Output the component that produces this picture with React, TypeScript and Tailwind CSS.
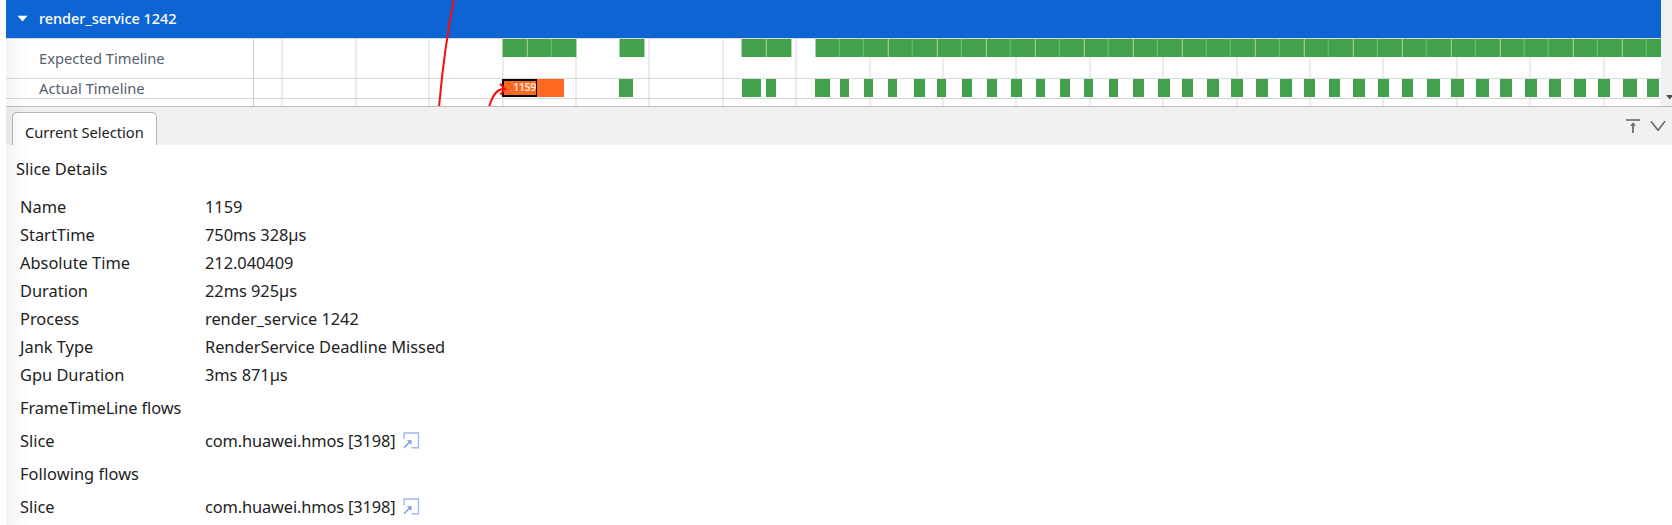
const GREEN = "#43a04c";

const gridLines = [
  281, 355, 428, 502, 575, 648, 722, 795, 869, 942, 1015, 1089, 1162, 1236, 1309, 1382, 1456, 1529, 1603,
];

const expectedRuns = [
  [502, 576],
  [619, 644],
  [741, 791],
  [815, 1661],
];

const strongGaps = [527, 766, 888, 937, 986, 1035, 1084, 1133, 1182, 1255, 1304, 1353, 1402, 1451, 1500, 1573, 1622];

const weakGaps = [
  551, 839, 863, 912, 961, 1010, 1059, 1108, 1157, 1206, 1230, 1279, 1328, 1377, 1426, 1475, 1524, 1548, 1597, 1646,
];

const actualFrames = [
  [619, 633], [742, 761], [766, 776], [815, 830], [840, 849], [864, 873], [888, 897], [914, 925], [937, 946],
  [962, 972], [987, 997], [1011, 1022], [1036, 1045], [1060, 1070], [1084, 1093], [1109, 1118], [1133, 1144],
  [1158, 1170], [1182, 1193], [1207, 1219], [1231, 1243], [1256, 1268], [1280, 1292], [1304, 1315], [1329, 1340],
  [1353, 1365], [1378, 1389], [1402, 1413], [1427, 1440], [1451, 1464], [1476, 1489], [1500, 1512], [1525, 1537],
  [1549, 1561], [1574, 1586], [1598, 1610], [1623, 1637], [1647, 1659],
];

const details = [
  ["Name", "1159"],
  ["StartTime", "750ms 328µs"],
  ["Absolute Time", "212.040409"],
  ["Duration", "22ms 925µs"],
  ["Process", "render_service 1242"],
  ["Jank Type", "RenderService Deadline Missed"],
  ["Gpu Duration", "3ms 871µs"],
];

const flows = [
  { title: "FrameTimeLine flows", spacing: "tracking-[-0.11px]", target: "com.huawei.hmos [3198]" },
  { title: "Following flows", spacing: "tracking-[0.05px]", target: "com.huawei.hmos [3198]" },
];

function TimelineChart() {
  return (
    <svg className="block shrink-0" width="1407" height="67" viewBox="254 39 1407 67" shapeRendering="crispEdges">
      {gridLines.map((x) => (
        <rect key={x} x={x} y={39} width={2} height={67} fill="#ececec" />
      ))}
      <rect x={254} y={78} width={1407} height={1} fill="#d8d8d8" />
      <rect x={254} y={98} width={1407} height={1} fill="#d8d8d8" />
      {expectedRuns.map(([a, b]) => (
        <g key={a}>
          <rect x={a} y={39} width={b - a} height={18} fill={GREEN} />
          <rect x={a} y={39} width={1} height={18} fill="#a3d1a8" />
          {b < 1661 && <rect x={b} y={39} width={1} height={18} fill="#a9d3ad" />}
        </g>
      ))}
      {strongGaps.map((x) => (
        <g key={x}>
          <rect x={x - 1} y={39} width={1} height={18} fill="#5aab62" />
          <rect x={x} y={39} width={1} height={18} fill="#93c999" />
        </g>
      ))}
      {weakGaps.map((x) => (
        <g key={x}>
          <rect x={x - 1} y={39} width={1} height={18} fill="#55a95e" />
          <rect x={x} y={39} width={1} height={18} fill="#6cb474" />
        </g>
      ))}
      <rect x={502} y={79} width={62} height={18} fill="#ff6820" />
      {actualFrames.map(([a, b]) => (
        <rect key={a} x={a} y={79} width={b - a} height={18} fill={GREEN} />
      ))}
      <text x={513} y={91} fontSize={10.8} className="font-semibold" fill="#ffeadf" textLength={23.4}>
        1159
      </text>
      <path d="M502 79H537V97H502ZM504 81V95H536V81Z" fill="#000" fillRule="evenodd" />
    </svg>
  );
}

function FlowCurves() {
  return (
    <svg
      className="pointer-events-none absolute left-0 top-0"
      width="600"
      height="106"
      fill="none"
      stroke="#fb0d0d"
      strokeWidth="2"
    >
      <path d="M454 -1Q444.500 46 439 107" />
      <path d="M489 107C492 97 496 88.500 504.500 89" />
      <path d="M500 83.800L505 89L500.500 94.500" />
    </svg>
  );
}

function JumpIcon() {
  return (
    <svg className="ml-[7px]" width="17" height="17" viewBox="0 0 17 17" fill="none" stroke="#a0b8f0" strokeWidth="1.4">
      <path d="M1 7V1H15.500V15.700H8.500" />
      <path d="M1 15.700L7.500 9.200" stroke="#7898e6" />
      <path d="M4.500 9H7.800V12.300" stroke="#7898e6" />
    </svg>
  );
}

function SectionLabel({ children }: { children: string }) {
  return <div className="flex w-[248px] shrink-0 items-center border-r border-[#c9cbd6] pl-[33px]">{children}</div>;
}

export default function App() {
  return (
    <div className="relative flex h-[525px] w-[1672px] flex-col overflow-hidden bg-white pl-[6px] font-['Noto_Sans','Open_Sans',sans-serif] text-[16.4px] text-[#222222]">
      <div className="flex h-[106px] shrink-0">
        <div className="flex w-[1655px] shrink-0 flex-col">
          <div className="flex h-[38px] items-center bg-[#0d65d3] text-[14.5px] leading-[37px] font-medium text-white">
            <svg className="mb-px ml-[11px]" width="11" height="7" viewBox="0 0 11 7">
              <path d="M0.500 0.800H10.500L5.500 6.600Z" fill="#fff" />
            </svg>
            <span className="-mt-px ml-[11px] tracking-[-0.05px]">render_service 1242</span>
          </div>
          <div className="h-px shrink-0 bg-[#d8d8d8]" />
          <div className="flex h-[67px] text-[14.7px] text-[#55606e]">
            <div className="flex w-[248px] shrink-0 flex-col">
              <div className="flex h-[40px] border-b border-[#d8d8d8]">
                <SectionLabel>Expected Timeline</SectionLabel>
              </div>
              <div className="flex h-[20px] border-b border-[#d8d8d8]">
                <SectionLabel>Actual Timeline</SectionLabel>
              </div>
              <div className="h-[7px] w-[248px] border-r border-[#c9cbd6]" />
            </div>
            <TimelineChart />
          </div>
        </div>
        <div className="flex grow items-end justify-end bg-[#f1f1f1]">
          <svg className="mb-[6px]" width="6" height="5" viewBox="0 0 6 5">
            <path d="M0 0H7.500L3.700 4.500Z" fill="#505050" />
          </svg>
        </div>
      </div>

      <div className="flex h-[39px] shrink-0 items-end justify-between border-t border-[#bdbdbd] bg-[#f1f1f1] pl-[6px]">
        <div className="h-[33px] w-[145px] rounded-t-[5px] border border-b-0 border-[#b5b5b5] bg-white pt-[6px] pl-[12px] text-[14.7px] leading-[26px] tracking-[-0.03px]">
          Current Selection
        </div>
        <div className="flex h-[33px] items-start gap-[10px] pt-[7px] pr-[6px]">
          <svg width="14" height="15" viewBox="0 0 14 15" fill="none" stroke="#666">
            <path d="M0 1H14" stroke="#858585" strokeWidth="2" />
            <path d="M7 14V4.500" strokeWidth="1.700" />
            <path d="M4.800 6.800L7 4.300L9.200 6.800" strokeWidth="1.200" />
          </svg>
          <svg className="mt-[2px]" width="16" height="11" viewBox="0 0 16 11" fill="none" stroke="#666" strokeWidth="1.600">
            <path d="M1 0.300L8 9.300L15 0.300" />
          </svg>
        </div>
      </div>

      <div className="flex flex-col pt-[14px] pl-[14px]">
        <h2 className="mb-[14px] -ml-[4px] leading-[20px]">Slice Details</h2>
        {details.map(([label, value]) => (
          <div key={label} className="flex h-[28px] leading-[28px]">
            <span className="w-[185px]">{label}</span>
            <span className="tracking-[-0.04px]">{value}</span>
          </div>
        ))}
        <div className="mt-[2px] flex flex-col">
          {flows.map(({ title, spacing, target }) => (
            <div key={title} className="leading-[33px]">
              <div className={`h-[33px] ${spacing}`}>{title}</div>
              <div className="flex h-[33px] items-center">
                <span className="w-[185px]">Slice</span>
                <span className="tracking-[-0.13px]">{target}</span>
                <JumpIcon />
              </div>
            </div>
          ))}
        </div>
      </div>

      <div className="pointer-events-none absolute top-[39px] left-[6px] h-[486px] w-[24px] bg-linear-to-r from-black/4 to-transparent" />
      <FlowCurves />
    </div>
  );
}
